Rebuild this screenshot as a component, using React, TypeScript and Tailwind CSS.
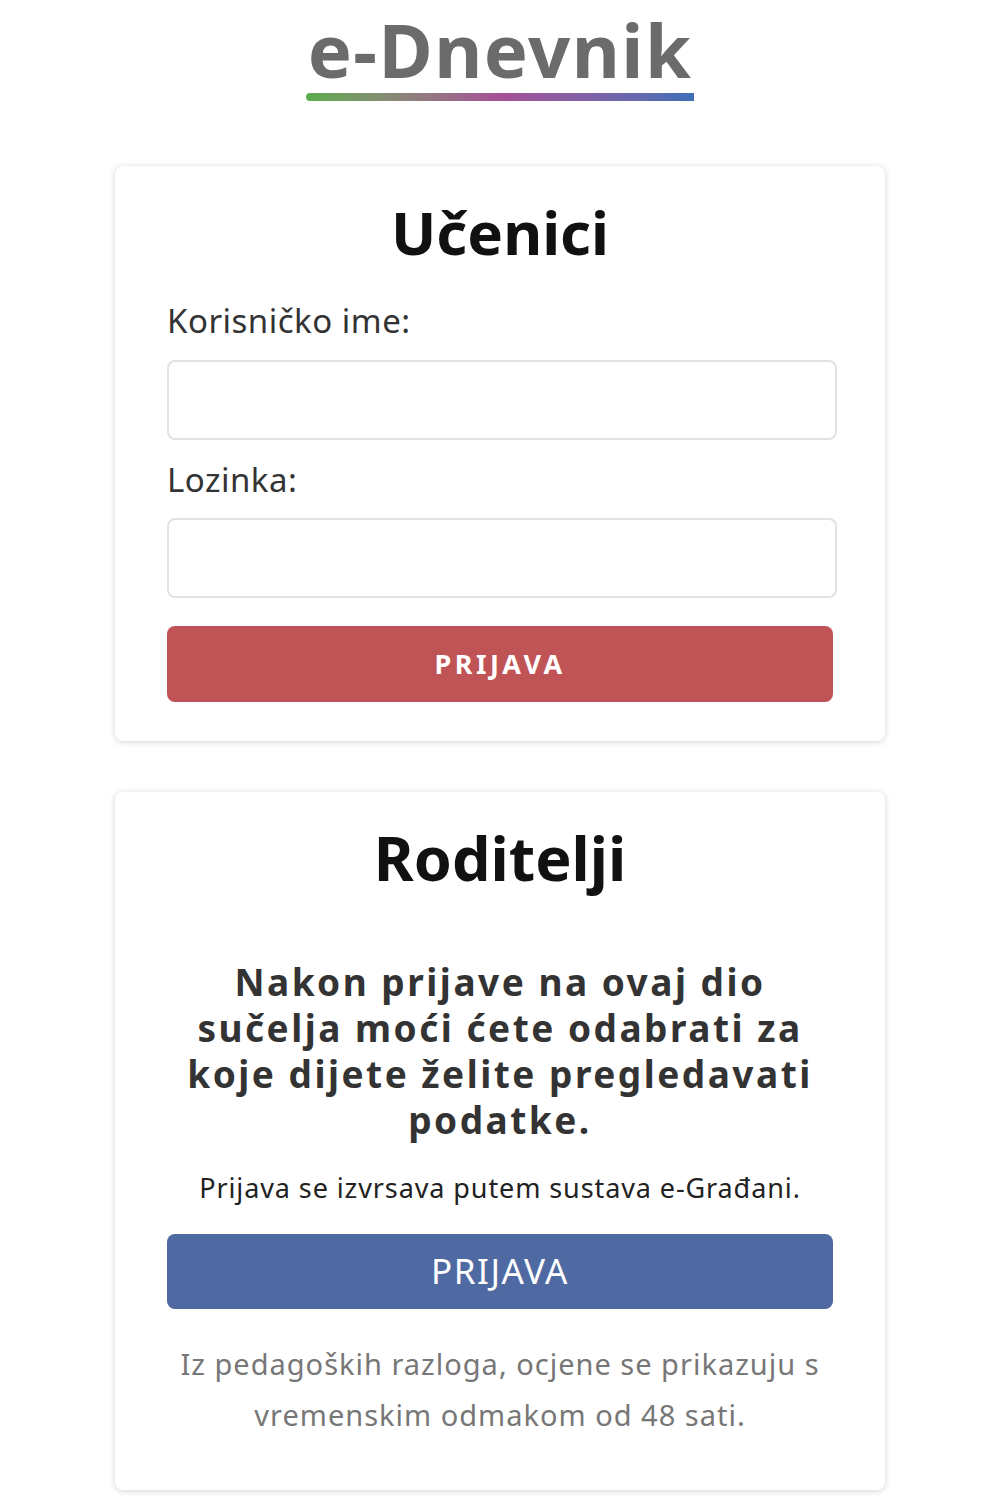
export default function App() {
  return (
    <div className="min-h-screen bg-white font-['Noto_Sans',sans-serif]">
      <div className="flex flex-col items-center">
        <div className="flex flex-col items-center">
          <h1 className="text-[74px] font-bold leading-[100px] tracking-[1.5px] text-[#6b6b6b]">e-Dnevnik</h1>
          <div className="-mt-[7px] h-[8px] w-[388px] rounded-l-full bg-gradient-to-r from-[#5aad4c] via-[#a54f96] to-[#3b6fb8]" />
        </div>

        <div className="mt-[65px] w-[770px] rounded-lg bg-white px-[52px] pt-[28px] pb-[39px] shadow-[0_1px_6px_rgba(0,0,0,0.18)]">
          <h2 className="text-center text-[60px] font-bold leading-[76px] text-[#111]">Učenici</h2>
          <label className="mt-[31px] block text-[33px] leading-[40px] tracking-[0.5px] text-[#333]">Korisničko ime:</label>
          <input type="text" className="mt-[19px] block h-[80px] w-[670px] rounded-lg border-2 border-[#e2e2e2] bg-white" />
          <label className="mt-[20px] block text-[33px] leading-[40px] tracking-[0.5px] text-[#333]">Lozinka:</label>
          <input type="password" className="mt-[18px] block h-[80px] w-[670px] rounded-lg border-2 border-[#e2e2e2] bg-white" />
          <button className="mt-[28px] flex h-[76px] w-[666px] items-center justify-center rounded-lg bg-[#c05356] text-[27px] font-bold tracking-[3.5px] text-white">
            PRIJAVA
          </button>
        </div>

        <div className="mt-[51px] w-[770px] rounded-lg bg-white px-[52px] pt-[28px] pb-[50px] shadow-[0_1px_6px_rgba(0,0,0,0.18)]">
          <h2 className="text-center text-[61px] font-bold leading-[76px] text-[#111]">Roditelji</h2>
          <p className="mx-auto mt-[63px] w-[660px] text-center text-[37px] font-bold leading-[46px] tracking-[2.5px] text-[#333]">
            Nakon prijave na ovaj dio sučelja moći ćete odabrati za koje dijete želite pregledavati podatke.
          </p>
          <p className="mt-[27px] text-center text-[27px] leading-[36px] tracking-[0.9px] text-[#222]">
            Prijava se izvrsava putem sustava e-Građani.
          </p>
          <button className="mt-[28px] flex h-[75px] w-[666px] items-center justify-center rounded-lg bg-[#4f6aa2] text-[35px] tracking-[1.5px] text-white">
            PRIJAVA
          </button>
          <p className="mx-auto mt-[29px] w-[660px] text-center text-[29px] leading-[51px] tracking-[1px] text-[#777]">
            Iz pedagoških razloga, ocjene se prikazuju s vremenskim odmakom od 48 sati.
          </p>
        </div>
        <div className="h-[21px]" />
      </div>
    </div>
  );
}
